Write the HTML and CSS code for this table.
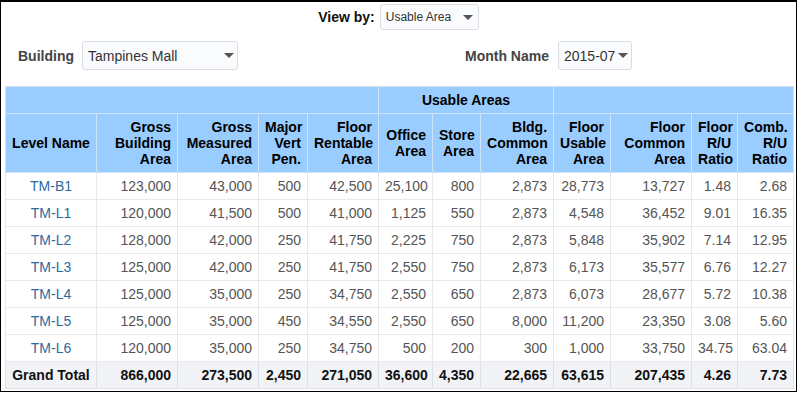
FILE: index.html
```html
<!DOCTYPE html>
<html lang="en">
<head>
  <meta charset="UTF-8">
  <title>Usable Area by Level</title>
  <link rel="stylesheet" href="styles.css">
</head>
<body>
  <div class="frame">
    <div class="viewby">
      <span class="viewby-label">View by:</span>
      <div class="select select-sm">
        <span class="select-text">Usable Area</span>
        <span class="caret"></span>
      </div>
    </div>

    <div class="filters">
      <div class="filter">
        <span class="filter-label">Building</span>
        <div class="select select-building">
          <span class="select-text">Tampines Mall</span>
          <span class="caret"></span>
        </div>
      </div>
      <div class="filter filter-month">
        <span class="filter-label">Month Name</span>
        <div class="select select-month">
          <span class="select-text">2015-07</span>
          <span class="caret"></span>
        </div>
      </div>
    </div>

    <table class="report">
      <colgroup>
        <col style="width:91px">
        <col style="width:81px">
        <col style="width:81px">
        <col style="width:49px">
        <col style="width:71px">
        <col style="width:54px">
        <col style="width:48px">
        <col style="width:73px">
        <col style="width:57px">
        <col style="width:81px">
        <col style="width:46px">
        <col style="width:56px">
      </colgroup>
      <thead>
        <tr class="group-row">
          <th colspan="5"></th>
          <th colspan="3" class="center">Usable Areas</th>
          <th colspan="4"></th>
        </tr>
        <tr>
          <th class="center">Level Name</th>
          <th>Gross<br>Building<br>Area</th>
          <th>Gross<br>Measured<br>Area</th>
          <th>Major<br>Vert<br>Pen.</th>
          <th>Floor<br>Rentable<br>Area</th>
          <th>Office<br>Area</th>
          <th>Store<br>Area</th>
          <th>Bldg.<br>Common<br>Area</th>
          <th>Floor<br>Usable<br>Area</th>
          <th>Floor<br>Common<br>Area</th>
          <th>Floor<br>R/U<br>Ratio</th>
          <th>Comb.<br>R/U<br>Ratio</th>
        </tr>
      </thead>
      <tbody>
        <tr>
          <td class="level">TM-B1</td><td>123,000</td><td>43,000</td><td>500</td><td>42,500</td>
          <td>25,100</td><td>800</td><td>2,873</td><td>28,773</td><td>13,727</td><td>1.48</td><td>2.68</td>
        </tr>
        <tr>
          <td class="level">TM-L1</td><td>120,000</td><td>41,500</td><td>500</td><td>41,000</td>
          <td>1,125</td><td>550</td><td>2,873</td><td>4,548</td><td>36,452</td><td>9.01</td><td>16.35</td>
        </tr>
        <tr>
          <td class="level">TM-L2</td><td>128,000</td><td>42,000</td><td>250</td><td>41,750</td>
          <td>2,225</td><td>750</td><td>2,873</td><td>5,848</td><td>35,902</td><td>7.14</td><td>12.95</td>
        </tr>
        <tr>
          <td class="level">TM-L3</td><td>125,000</td><td>42,000</td><td>250</td><td>41,750</td>
          <td>2,550</td><td>750</td><td>2,873</td><td>6,173</td><td>35,577</td><td>6.76</td><td>12.27</td>
        </tr>
        <tr>
          <td class="level">TM-L4</td><td>125,000</td><td>35,000</td><td>250</td><td>34,750</td>
          <td>2,550</td><td>650</td><td>2,873</td><td>6,073</td><td>28,677</td><td>5.72</td><td>10.38</td>
        </tr>
        <tr>
          <td class="level">TM-L5</td><td>125,000</td><td>35,000</td><td>450</td><td>34,550</td>
          <td>2,550</td><td>650</td><td>8,000</td><td>11,200</td><td>23,350</td><td>3.08</td><td>5.60</td>
        </tr>
        <tr>
          <td class="level">TM-L6</td><td>120,000</td><td>35,000</td><td>250</td><td>34,750</td>
          <td>500</td><td>200</td><td>300</td><td>1,000</td><td>33,750</td><td>34.75</td><td>63.04</td>
        </tr>
        <tr class="total">
          <td class="center">Grand Total</td><td>866,000</td><td>273,500</td><td>2,450</td><td>271,050</td>
          <td>36,600</td><td>4,350</td><td>22,665</td><td>63,615</td><td>207,435</td><td>4.26</td><td>7.73</td>
        </tr>
      </tbody>
    </table>
  </div>
</body>
</html>
```

FILE: styles.css
```css
body {
  margin: 0;
  padding: 0;
  background: #fff;
  font-family: "Liberation Sans", Arial, sans-serif;
  color: #444;
}
.frame {
  width: 797px;
  height: 392px;
  box-sizing: border-box;
  border: 1px solid #000;
  border-top-width: 2px;
  padding: 2px 4px 0 4px;
}

/* top controls */
.viewby {
  display: flex;
  justify-content: center;
  align-items: center;
  gap: 5px;
  height: 26px;
}
.viewby-label {
  font-size: 14px;
  font-weight: bold;
  color: #111;
}
.select {
  display: flex;
  align-items: center;
  box-sizing: border-box;
  height: 29px;
  padding: 0 5px;
  background: #fafbfd;
  border: 1px solid #dadee4;
  border-radius: 3px;
  font-size: 14px;
  color: #333;
}
.select-text { flex: 1; white-space: nowrap; }
.caret {
  width: 0;
  height: 0;
  border-left: 5px solid transparent;
  border-right: 5px solid transparent;
  border-top: 5px solid #555;
}
.select-sm {
  width: 99px;
  height: 26px;
  font-size: 12px;
  padding-right: 5px;
}
.select-building { width: 156px; padding-right: 3px; }
.select-month { width: 74px; padding-right: 4px; }
.select-month .select-text { flex: none; margin-right: 3px; }

.filters {
  display: flex;
  align-items: center;
  margin-top: 11px;
  padding-left: 13px;
}
.filter {
  display: flex;
  align-items: center;
  gap: 8px;
}
.filter-month {
  margin-left: auto;
  margin-right: 160px;
  gap: 9px;
}
.filter-label {
  font-size: 14px;
  font-weight: bold;
  color: #444;
}

/* table */
.report {
  margin-top: 16px;
  width: 788px;
  table-layout: fixed;
  border-collapse: collapse;
  font-size: 14px;
  line-height: 16px;
}
.report th,
.report td {
  padding: 5px 6px;
  text-align: right;
  vertical-align: middle;
  white-space: nowrap;
}
.report th {
  background: #99ccff;
  color: #000;
  font-weight: bold;
  border: 1px solid #cfe3f8;
}
.report thead tr:first-child th { border-top-color: #d6dde6; }
.report td {
  border: 1px solid #e6e8eb;
  color: #555;
}
.report .center { text-align: center; }
.report td.level {
  text-align: center;
  color: #2f6a9e;
}
.report tr.total td {
  background: #f1f3f7;
  color: #111;
  font-weight: bold;
  border-color: #dde1e7;
}
```
